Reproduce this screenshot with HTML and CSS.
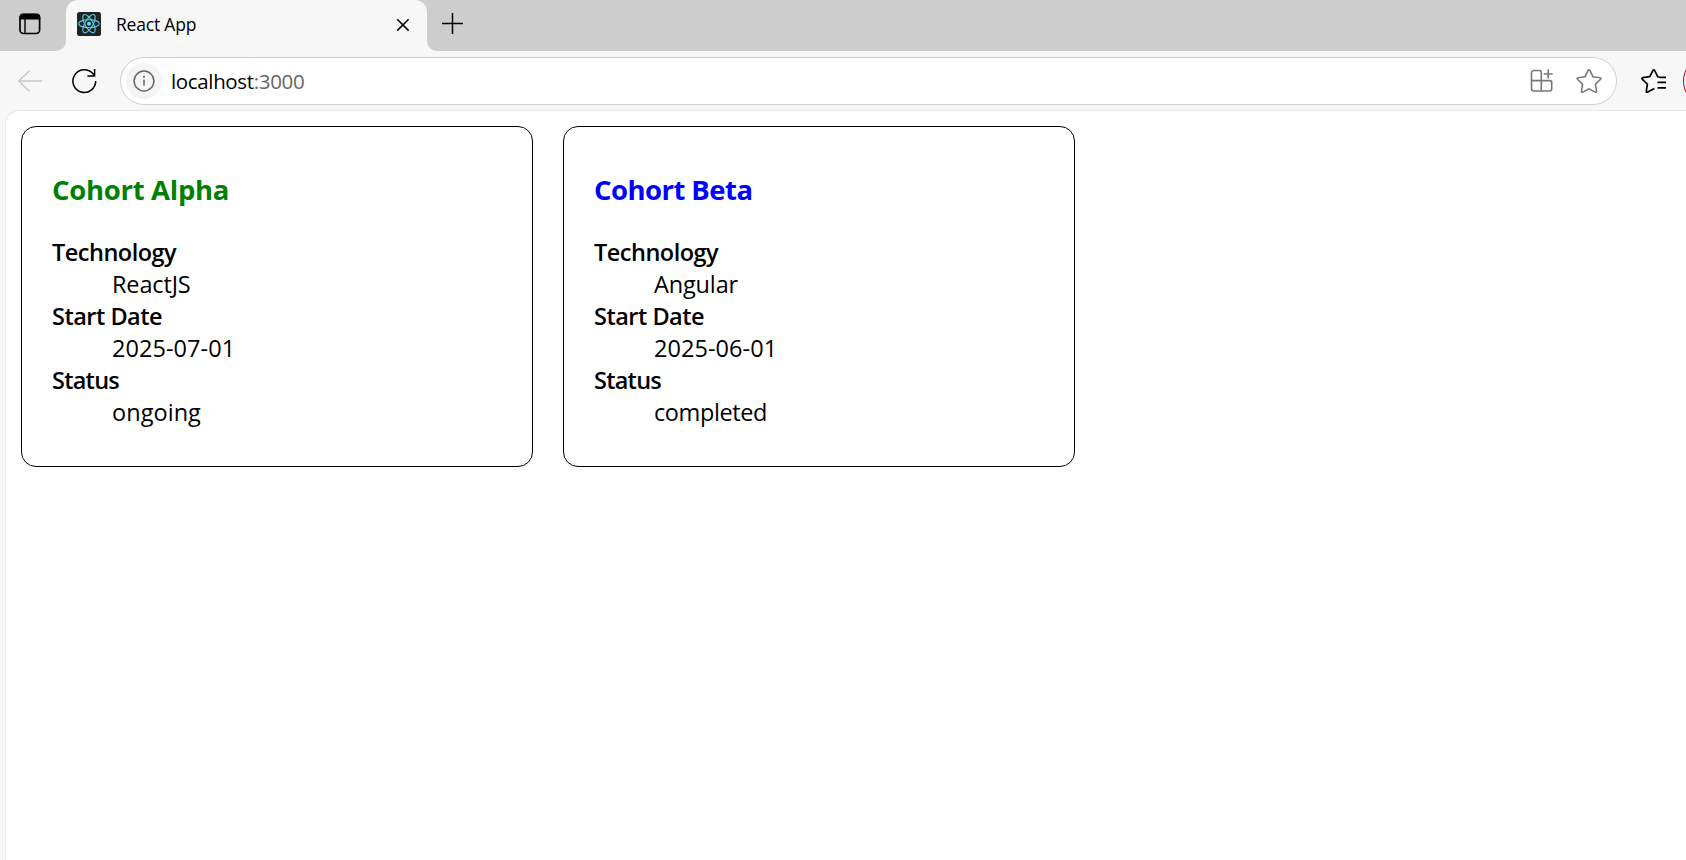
FILE: index.html
```html
<!DOCTYPE html>
<html lang="en">
<head>
<meta charset="utf-8">
<title>React App</title>
<link rel="stylesheet" href="styles.css">
</head>
<body>
<div class="browser">
  <header class="tabs">
    <div class="tabs-start">
      <svg width="24" height="24" viewBox="0 0 24 24"><rect x="2" y="2.5" width="19.6" height="19" rx="3.5" fill="none" stroke="#000" stroke-width="1.7"/><path d="M1.5 7.5V5a3.5 3.5 0 0 1 3.5-3.5h13.800A3.500 3.500 0 0 1 22.300 5v2.500z"/><path d="M7 7v14" stroke="#000" stroke-width="1.400"/></svg>
    </div>
    <div class="tab-slot">
      <div class="tab">
        <svg class="favicon" width="24" height="24" viewBox="0 0 24 24"><rect width="24" height="24" rx="2.500" fill="#222"/><g fill="none" stroke="#5ccbe6" stroke-width="1.150"><ellipse cx="12" cy="11.700" rx="10.300" ry="4"/><ellipse cx="12" cy="11.700" rx="10.300" ry="4" transform="rotate(60 12 11.700)"/><ellipse cx="12" cy="11.700" rx="10.300" ry="4" transform="rotate(120 12 11.700)"/></g><circle cx="12" cy="11.700" r="2" fill="#61dafb"/></svg>
        <span class="tab-title">React App</span>
        <svg class="close" width="14" height="14" viewBox="0 0 14 14"><path d="M1.200 1.200l11.400 11.400M12.600 1.200L1.200 12.600" stroke="#000" stroke-width="1.600"/></svg>
      </div>
    </div>
    <div class="tabs-end">
      <svg width="22" height="22" viewBox="0 0 22 22"><path d="M0 10.500h21M10.500 0v21" stroke="#000" stroke-width="1.500"/></svg>
    </div>
  </header>
  <nav class="toolbar">
    <svg class="back" width="26" height="24" viewBox="0 0 26 24"><path d="M25 12H2M12.500 1.800L1.700 12l10.800 10.300" fill="none" stroke="#c8c8c8" stroke-width="1.400"/></svg>
    <svg class="reload" width="26" height="26" viewBox="0 0 26 26"><path d="M24.700 13A11.400 11.400 0 1 1 21.800 5.500L23.500 7.700M23.600 1v7.100h-7.200" fill="none" stroke="#000" stroke-width="1.500"/></svg>
    <div class="address">
      <span class="info"><svg width="22" height="22" viewBox="0 0 22 22"><circle cx="11" cy="11" r="9.900" fill="none" stroke="#666" stroke-width="1.500"/><path d="M11 9.700v6" stroke="#666" stroke-width="1.500"/><circle cx="11" cy="6.800" r="1.100" fill="#666"/></svg></span>
      <span class="url">localhost<span class="port">:3000</span></span>
      <svg class="apps" width="24" height="24" viewBox="0 0 24 24"><path d="M11.300 22H4a2.500 2.500 0 0 1-2.500-2.500V4A2.500 2.500 0 0 1 4 1.500h5.300a2 2 0 0 1 2 2zM1.500 11.600h18.200a2 2 0 0 1 2 2V20a2 2 0 0 1-2 2h-8.400M18.200.5v9M13.700 5h9" fill="none" stroke="#777" stroke-width="1.600"/></svg>
      <svg class="star" width="26" height="26" viewBox="0 0 26 26"><path d="M12.100 2.400q.9-1.400 1.800 0l3.100 6.300 7 1q1.500.4.500 1.600l-5.100 5 1.200 7q0 1.500-1.400.8L13 20.800l-6.200 3.300q-1.400.7-1.400-.8l1.200-7-5.100-5q-1-1.200.5-1.600l7-1z" fill="none" stroke="#777" stroke-width="1.600"/></svg>
    </div>
    <svg class="favorites" width="26" height="26" viewBox="0 0 26 26"><path d="M25 9.300h-6.200L16.700 8.700l-3-6.200q-.9-1.500-1.800 0L8.800 8.600l-6.900 1q-1.500.4-.5 1.700l5 4.900-1.100 7q0 1.500 1.400.9l6.700-3.500M16.500 14.400H25M16.500 19.800H25" fill="none" stroke="#000" stroke-width="1.700" stroke-linejoin="round"/></svg>
    <span class="profile"></span>
  </nav>
  <main class="page">
    <section class="card">
      <h3 class="title ongoing">Cohort Alpha</h3>
      <dl class="details">
        <dt>Technology</dt><dd>ReactJS</dd>
        <dt>Start Date</dt><dd class="date">2025-07-01</dd>
        <dt class="tight">Status</dt><dd class="date">ongoing</dd>
      </dl>
    </section>
    <section class="card">
      <h3 class="title completed">Cohort Beta</h3>
      <dl class="details">
        <dt>Technology</dt><dd>Angular</dd>
        <dt>Start Date</dt><dd class="date">2025-06-01</dd>
        <dt class="tight">Status</dt><dd class="tight">completed</dd>
      </dl>
    </section>
  </main>
</div>
</body>
</html>
```

FILE: styles.css
```css
* { box-sizing: border-box; }
body { margin: 0; overflow: hidden; font-family: "Open Sans", "Noto Sans", sans-serif; color: #000; }
svg { display: block; flex: none; }
.browser { height: 860px; display: flex; flex-direction: column; background: #f7f7f7; overflow: hidden; }
.tabs { display: flex; height: 51px; flex: none; }
.tabs-start { width: 66px; background: #cdcdcd; border-bottom-right-radius: 10px; padding: 12px 0 0 18px; }
.tab-slot { width: 361px; background: linear-gradient(#cdcdcd 50%, #f7f7f7 50%); }
.tab { height: 51px; background: #f7f7f7; border-radius: 12px 12px 0 0; display: flex; align-items: center; padding: 0 17px 3px 11px; }
.tab-title { font-size: 17.5px; margin: -1px 0 0 15px; flex: 1; letter-spacing: -0.2px; }
.close { margin-top: 1px; }
.tabs-end { flex: 1; background: #cdcdcd; border-bottom-left-radius: 10px; padding: 13px 0 0 15px; }
.toolbar { height: 59px; flex: none; display: flex; align-items: center; padding: 0 0 0 17px; }
.back { margin-right: 28px; }
.reload { margin-right: 23px; }
.address { width: 1497px; flex: none; height: 48px; background: #fff; border: 1.5px solid #cfcfcf; border-radius: 24px; display: flex; align-items: center; padding: 0 14px 0 5px; }
.info { width: 36px; height: 36px; border-radius: 50%; background: #f4f4f4; display: flex; align-items: center; justify-content: center; }
.url { flex: 1; margin-left: 9px; font-size: 20.5px; letter-spacing: -0.35px; }
.port { color: #666; }
.apps { margin-right: 22.5px; }
.favorites { margin-left: 23.5px; }
.profile { width: 32px; height: 40px; flex: none; margin-left: 16px; border: 1.5px solid #b5121b; border-radius: 50%; }
.page { flex: 1; margin-left: 5px; background: #fff; border: 1px solid #e8e8e8; border-right: 0; border-bottom: 0; border-top-left-radius: 14px; display: flex; align-items: flex-start; gap: 30px; padding: 15px 0 0 15px; }
.card { width: 512px; height: 341px; border: 1px solid #000; border-radius: 15px; padding: 44px 30px 0; }
.title { margin: 0; font-size: 27.5px; line-height: 38px; font-weight: 700; letter-spacing: -0.3px; }
.ongoing { color: #008000; }
.completed { color: #0000ff; letter-spacing: -0.55px; }
.details { margin: 27px 0 0; font-size: 23.5px; line-height: 32px; }
.details dt { font-weight: 600; letter-spacing: -0.5px; }
.details dd { margin-left: 60px; letter-spacing: -0.15px; }
.details .date { letter-spacing: 0.05px; }
.details dt.tight { letter-spacing: -0.75px; }
.details dd.tight { letter-spacing: -0.4px; }
```
